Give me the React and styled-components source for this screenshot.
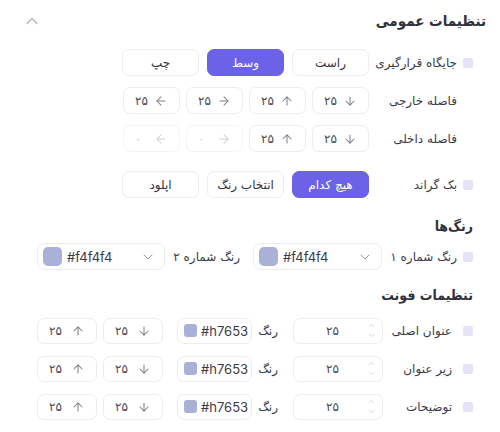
import React from 'react';
import styled, { createGlobalStyle } from 'styled-components';
import { ChevronUp, ChevronDown, ArrowUp, ArrowDown, ArrowLeft, ArrowRight } from 'lucide-react';

const GlobalStyle = createGlobalStyle`
  html, body { margin: 0; padding: 0; background: #ffffff; }
  body { font-family: "DejaVu Sans", "Inter", sans-serif; }
  * { box-sizing: border-box; }
`;

const Page = styled.div`
  width: 500px;
  height: 432px;
  direction: rtl;
  background: #ffffff;
  color: #33333f;
  overflow: hidden;
`;

const Header = styled.div`
  height: 42px;
  display: flex;
  align-items: center;
  justify-content: space-between;
  padding: 0 14px 0 22px;
  color: #b3b3c2;
`;

const Title = styled.h2`
  margin: 0;
  font-family: "DejaVu Sans Condensed", "DejaVu Sans", sans-serif;
  font-size: 15px;
  font-weight: 700;
  line-height: 24px;
  color: #30303b;
`;

const SubTitle = styled.h3`
  margin: ${p => p.$top}px 0 0;
  padding-right: 27px;
  font-family: "DejaVu Sans Condensed", "DejaVu Sans", sans-serif;
  font-size: 14px;
  font-weight: 700;
  line-height: 24px;
  color: #30303b;
`;

const Section = styled.div`
  display: flex;
  flex-direction: column;
  gap: ${p => p.$gap}px;
  padding-right: 27px;
  margin-top: ${p => p.$top}px;
`;

const Row = styled.div`
  display: flex;
  align-items: center;
  height: 27px;
  margin-top: ${p => p.$top || 0}px;
`;

const Bullet = styled.span`
  width: 10px;
  height: 10px;
  border-radius: 2px;
  flex-shrink: 0;
  background: ${p => (p.$hidden ? 'transparent' : '#e4e4f6')};
`;

const Label = styled.span`
  width: ${p => p.$w}px;
  margin-right: ${p => p.$gap}px;
  flex-shrink: 0;
  font-size: 12px;
  white-space: nowrap;
  color: #3b3b48;
`;

const Controls = styled.div`
  display: flex;
  align-items: center;
  gap: ${p => p.$gap}px;
`;

const OptionButton = styled.button`
  width: 77px;
  height: 27px;
  border-radius: 7px;
  border: 1px solid ${p => (p.$active ? '#6b62e8' : '#ececf1')};
  background: ${p => (p.$active ? '#6b62e8' : '#ffffff')};
  color: ${p => (p.$active ? '#ffffff' : '#33333f')};
  font-family: "DejaVu Sans", sans-serif;
  font-size: 12px;
  padding: 0;
  cursor: pointer;
`;

const ValueBox = styled.div`
  width: ${p => p.$w || 57}px;
  height: ${p => p.$h || 27}px;
  border: 1px solid ${p => (p.$disabled ? '#f3f3f6' : '#ececf1')};
  border-radius: 7px;
  display: flex;
  align-items: center;
  justify-content: space-between;
  padding: 0 ${p => p.$pad || 10}px;
  color: ${p => (p.$disabled ? '#cfcfd6' : '#7e7e8a')};
  margin-left: ${p => p.$after || 0}px;
`;

const Num = styled.span`
  font-size: 12px;
  color: ${p => (p.$disabled ? '#c8c8cf' : '#4a4a56')};
`;

const SpinBox = styled.div`
  width: 90px;
  height: 26px;
  border: 1px solid #ececf1;
  border-radius: 7px;
  display: flex;
  align-items: center;
  padding: 0 6px 0 0;
  margin-left: ${p => p.$after || 0}px;
`;

const Spinner = styled.div`
  display: flex;
  flex-direction: column;
  align-items: center;
  color: #b5b5c0;
  gap: 1px;
`;

const SpinNum = styled.span`
  flex: 1;
  text-align: center;
  font-size: 12px;
  color: #4a4a56;
  padding-left: 4px;
`;

const SmallLabel = styled.span`
  font-size: 12px;
  color: #3b3b48;
  width: ${p => p.$w}px;
  white-space: nowrap;
  margin-left: ${p => p.$after || 0}px;
`;

const ColorField = styled.div`
  direction: ltr;
  width: ${p => p.$w}px;
  height: ${p => p.$h}px;
  border: 1px solid #ececf1;
  border-radius: 7px;
  display: flex;
  align-items: center;
  gap: ${p => p.$gap}px;
  padding: 0 ${p => p.$padR || 6}px 0 ${p => p.$padL}px;
  margin-left: ${p => p.$after || 0}px;
`;

const Swatch = styled.span`
  width: ${p => p.$size}px;
  height: ${p => p.$size}px;
  border-radius: ${p => p.$r}px;
  background: #aab1d6;
  flex-shrink: 0;
`;

const HexText = styled.span`
  font-family: "Inter", "Liberation Sans", sans-serif;
  font-size: 13px;
  color: #3a3a48;
  flex: 1;
`;

const SelectCaret = styled.span`
  display: flex;
  color: #9a9aa6;
`;

const Spacer = styled.div`
  height: ${p => p.$h}px;
`;

const dirBoxes = (disabledLast) => [
  { icon: <ArrowDown size={14} strokeWidth={1.75} />, v: '۲۵' },
  { icon: <ArrowUp size={14} strokeWidth={1.75} />, v: '۲۵' },
  { icon: <ArrowRight size={14} strokeWidth={1.75} />, v: disabledLast ? '۰' : '۲۵', d: disabledLast },
  { icon: <ArrowLeft size={14} strokeWidth={1.75} />, v: disabledLast ? '۰' : '۲۵', d: disabledLast },
];

function DirRow({ label, disabledLast, top }) {
  return (
    <Row $top={top}>
      <Bullet $hidden />
      <Label $w={88} $gap={6}>{label}</Label>
      <Controls $gap={6}>
        {dirBoxes(disabledLast).map((b, i) => (
          <ValueBox key={i} $disabled={b.d} $pad={11}>
            {b.icon}
            <Num $disabled={b.d}>{b.v}</Num>
          </ValueBox>
        ))}
      </Controls>
    </Row>
  );
}

function FontRow({ label }) {
  return (
    <Row $h={26}>
      <Bullet />
      <Label $w={69} $gap={11}>{label}</Label>
      <Controls $gap={0}>
        <SpinBox $after={15}>
          <Spinner>
            <ChevronUp size={9} strokeWidth={1.5} />
            <ChevronDown size={9} strokeWidth={1.5} />
          </Spinner>
          <SpinNum>۲۵</SpinNum>
        </SpinBox>
        <SmallLabel $w={20} $after={6}>رنگ</SmallLabel>
        <ColorField $w={75} $h={26} $gap={4} $padL={6} $after={14}>
          <Swatch $size={13} $r={3} />
          <HexText>#h7653</HexText>
        </ColorField>
        <ValueBox $w={60} $h={26} $after={6} $pad={11}>
          <ArrowDown size={14} strokeWidth={1.75} />
          <Num>۲۵</Num>
        </ValueBox>
        <ValueBox $w={60} $h={26} $pad={11}>
          <ArrowUp size={14} strokeWidth={1.75} />
          <Num>۲۵</Num>
        </ValueBox>
      </Controls>
    </Row>
  );
}

function ColorSelect({ w, after }) {
  return (
    <ColorField $w={w} $h={27} $gap={5} $padL={5} $padR={8} $after={after}>
      <Swatch $size={19} $r={5} />
      <HexText>#f4f4f4</HexText>
      <SelectCaret><ChevronDown size={16} strokeWidth={1.5} /></SelectCaret>
    </ColorField>
  );
}

export default function App() {
  return (
    <>
      <GlobalStyle />
      <Page>
        <Header>
          <Title>تنظیمات عمومی</Title>
          <ChevronUp size={20} strokeWidth={1.5} />
        </Header>

        <Section $gap={11} $top={7}>
          <Row>
            <Bullet />
            <Label $w={88} $gap={6}>جایگاه قرارگیری</Label>
            <Controls $gap={8}>
              <OptionButton>راست</OptionButton>
              <OptionButton $active>وسط</OptionButton>
              <OptionButton>چپ</OptionButton>
            </Controls>
          </Row>
          <DirRow label="فاصله خارجی" />
          <DirRow label="فاصله داخلی" disabledLast />
          <Row $top={8}>
            <Bullet />
            <Label $w={88} $gap={6}>بک گراند</Label>
            <Controls $gap={8}>
              <OptionButton $active>هیچ کدام</OptionButton>
              <OptionButton>انتخاب رنگ</OptionButton>
              <OptionButton>اپلود</OptionButton>
            </Controls>
          </Row>
        </Section>

        <SubTitle $top={16}>رنگ‌ها</SubTitle>
        <Section $gap={0} $top={5}>
          <Row>
            <Bullet />
            <Label $w={75} $gap={6}>رنگ شماره ۱</Label>
            <Controls $gap={0}>
              <ColorSelect w={129} after={13} />
              <SmallLabel $w={66} $after={9}>رنگ شماره ۲</SmallLabel>
              <ColorSelect w={128} />
            </Controls>
          </Row>
        </Section>

        <SubTitle $top={13}>تنظیمات فونت</SubTitle>
        <Section $gap={11} $top={10}>
          <FontRow label="عنوان اصلی" />
          <FontRow label="زیر عنوان" />
          <FontRow label="توضیحات" />
        </Section>
        <Spacer $h={10} />
      </Page>
    </>
  );
}
